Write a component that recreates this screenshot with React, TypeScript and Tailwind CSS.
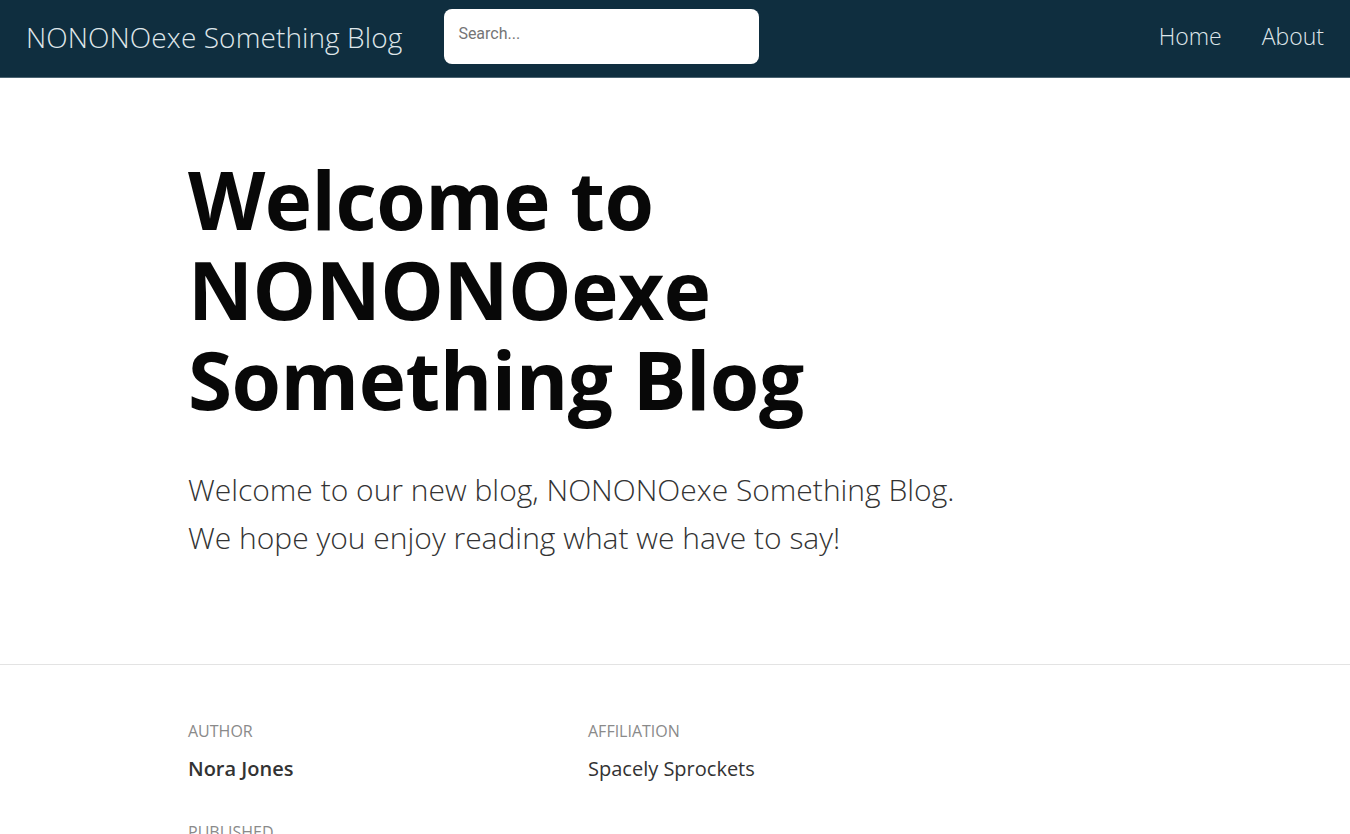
import React from 'react';

const meta = [
  { label: 'Author', value: 'Nora Jones', bold: true },
  { label: 'Affiliation', value: 'Spacely Sprockets', bold: false },
  { label: 'Published', value: 'June 1, 2023', bold: false },
];

const App: React.FC = () => {
  return (
    <div className="min-h-screen bg-white font-['Open_Sans',sans-serif] text-[#111]">
      <header className="h-[78px] bg-[#0f2e3f] border-b border-[#4b6472] flex items-center justify-between px-[26px]">
        <div className="flex items-center gap-[42px] mb-[4px]">
          <span className="text-[28px] font-light text-[#dfe6ea] tracking-[0.1px]">NONONOexe Something Blog</span>
          <input
            placeholder="Search..."
            className="w-[315px] h-[55px] bg-white rounded-lg px-[14px] pb-[6px] text-[16px] font-['Roboto',sans-serif] text-[#333] placeholder:text-[#757575] outline-none"
          />
        </div>
        <nav className="flex items-center gap-[40px] text-[23px] font-light text-[#dfe6ea] mb-[4px]">
          <a>Home</a>
          <a>About</a>
        </nav>
      </header>

      <main>
        <section className="w-[974px] mx-auto pt-[76px] pb-[102px]">
          <h1 className="text-[80px] leading-[90px] font-bold tracking-[-0.5px] text-[#080808]">
            Welcome to
            <br />
            NONONOexe
            <br />
            Something Blog
          </h1>
          <p className="mt-[42px] text-[30px] leading-[48px] font-light text-[#333]">
            Welcome to our new blog, NONONOexe Something Blog.
            <br />
            We hope you enjoy reading what we have to say!
          </p>
        </section>

        <div className="border-t border-[#e3e3e3]" />

        <section className="w-[974px] mx-auto pt-[54px] grid grid-cols-[400px_400px] gap-y-[36px]">
          {meta.map(m => (
            <div key={m.label} className="flex flex-col gap-[11px]">
              <span className="text-[16px] uppercase text-[#8a8a8a]">{m.label}</span>
              <span className={`text-[20px] text-[#333] ${m.bold ? 'font-semibold' : 'font-normal'}`}>{m.value}</span>
            </div>
          ))}
        </section>
      </main>
    </div>
  );
};

export default App;
